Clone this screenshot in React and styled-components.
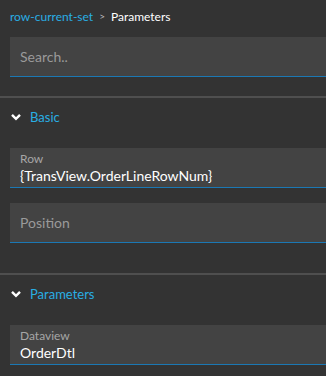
import React from "react";
import styled, { createGlobalStyle } from "styled-components";

const GlobalStyle = createGlobalStyle`
  html, body {
    margin: 0;
    padding: 0;
    background: #333333;
    overflow: hidden;
  }
  body {
    font-family: Lato, "Open Sans", Arial, sans-serif;
  }
`;

const Panel = styled.div`
  width: 326px;
  height: 376px;
  background: #333333;
  overflow: hidden;
`;

const Breadcrumb = styled.div`
  display: flex;
  align-items: center;
  gap: 6px;
  height: 32px;
  padding: 0 0 0 10px;
  font-size: 12px;
  color: #ffffff;
`;

const Crumb = styled.span`
  color: #29aee3;
`;

const Sep = styled.span`
  color: #bbbbbb;
  font-size: 10px;
`;

const Block = styled.div`
  padding: ${(p) => p.$pad || "5px 0 20px 10px"};
  display: flex;
  flex-direction: column;
  gap: 15px;
`;

const Divider = styled.div`
  height: 2px;
  background: #4f4f4f;
`;

const Field = styled.div`
  height: 40px;
  box-sizing: border-box;
  background: #434343;
  border-bottom: 1px solid #1b78b4;
  padding: 0 0 0 10px;
  display: flex;
  flex-direction: column;
  justify-content: ${(p) => (p.$label ? "flex-start" : "center")};
  padding-top: ${(p) => (p.$label ? "3px" : "0")};
`;

const Placeholder = styled.span`
  color: #9a9a9a;
  font-size: 14px;
`;

const Label = styled.span`
  color: #a6a6a6;
  font-size: 12px;
  line-height: 16px;
`;

const Value = styled.span`
  color: #ffffff;
  font-size: 14px;
  line-height: 18px;
`;

const SectionHead = styled.div`
  display: flex;
  align-items: center;
  gap: 9px;
  height: 38px;
  padding-left: 11px;
  color: #29aee3;
  font-size: 13px;
  margin-bottom: 12px;
`;

const Chevron = () => (
  <svg width="10" height="8" viewBox="0 0 10 8">
    <path d="M1 1.8 L5 5.8 L9 1.8" fill="none" stroke="#ffffff" strokeWidth="2.4" />
  </svg>
);

function Section({ title, bottom, children }) {
  return (
    <div>
      <SectionHead>
        <Chevron />
        <span>{title}</span>
      </SectionHead>
      <Block $pad={`0 0 ${bottom}px 10px`}>{children}</Block>
    </div>
  );
}

export default function App() {
  return (
    <Panel>
      <GlobalStyle />
      <Breadcrumb>
        <Crumb>row-current-set</Crumb>
        <Sep>&gt;</Sep>
        <span>Parameters</span>
      </Breadcrumb>
      <Block $pad="5px 0 19px 10px">
        <Field>
          <Placeholder>Search..</Placeholder>
        </Field>
      </Block>
      <Divider />
      <Section title="Basic" bottom={30}>
        <Field $label>
          <Label>Row</Label>
          <Value>{"{TransView.OrderLineRowNum}"}</Value>
        </Field>
        <Field>
          <Placeholder>Position</Placeholder>
        </Field>
      </Section>
      <Divider />
      <Section title="Parameters" bottom={20}>
        <Field $label>
          <Label>Dataview</Label>
          <Value>OrderDtl</Value>
        </Field>
      </Section>
    </Panel>
  );
}
